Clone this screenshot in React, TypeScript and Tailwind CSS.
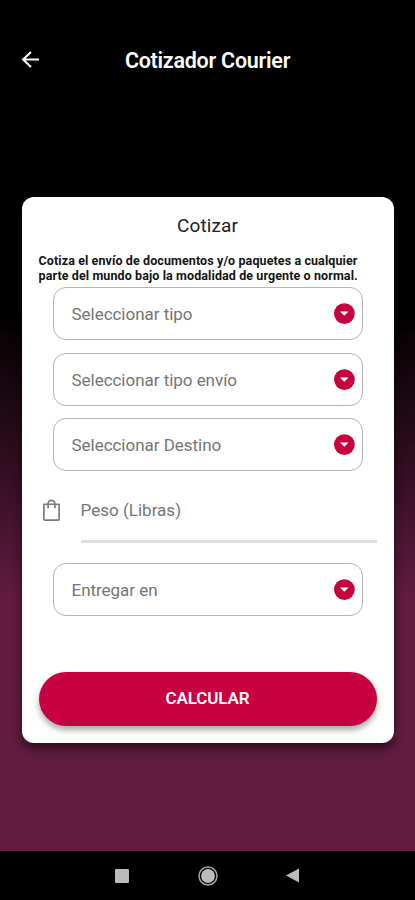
import { useState } from 'react'

interface SelectFieldProps {
  label: string
  className?: string
}

function SelectField({ label, className = '' }: SelectFieldProps) {
  return (
    <button
      type="button"
      className={`flex h-[53px] w-[310px] shrink-0 items-center justify-between self-center rounded-[13px] border border-[#b5b5b5] pl-[18px] pr-[7px] text-left text-[#757575] ${className}`}
    >
      <span className="whitespace-nowrap pt-[2px] text-[17px] tracking-[-0.03px]">{label}</span>
      <svg width="21" height="21" viewBox="0 0 21 21" className="shrink-0">
        <circle cx="10.4" cy="10.6" r="10.4" fill="#c70040" />
        <path d="M6 8.4h8.6l-4.3 4.3z" fill="#fff" />
      </svg>
    </button>
  )
}

function BagIcon() {
  return (
    <svg width="19" height="23" viewBox="0 0 20 24" fill="none" stroke="#7c7c7c" strokeWidth="1.8" className="shrink-0">
      <path d="M2 5.4h16v15.8a1 1 0 0 1-1 1H3a1 1 0 0 1-1-1z" strokeLinejoin="round" />
      <path d="M6.4 9.5V5a3.6 3.6 0 0 1 7.2 0v4.5" />
    </svg>
  )
}

function NavigationBar() {
  return (
    <nav className="flex h-[49px] shrink-0 items-center justify-between bg-black pl-[115px] pr-[116px]">
      <svg width="14" height="14" viewBox="0 0 14 14">
        <rect width="14" height="14" rx="1" fill="#bcbcbc" />
      </svg>
      <svg width="20" height="20" viewBox="0 0 20 20">
        <circle cx="10" cy="10" r="9" fill="none" stroke="#a4a4a4" strokeWidth="1.5" />
        <circle cx="10" cy="10" r="6.9" fill="#bcbcbc" />
      </svg>
      <svg width="13" height="15" viewBox="0 0 13 15">
        <path d="M13 0.5v14L0 7.5z" fill="#bcbcbc" />
      </svg>
    </nav>
  )
}

export default function App() {
  const [peso, setPeso] = useState('')

  return (
    <div className="flex h-[900px] w-[415px] flex-col overflow-hidden bg-[linear-gradient(to_bottom,#000_310px,#1b0911_400px,#360f22_480px,#611c3f_600px)] font-[Roboto,sans-serif]">
      <header className="flex h-[120px] shrink-0 items-center px-5 text-white">
        <button type="button" className="flex w-5 justify-center">
          <svg width="20" height="18" viewBox="0 0 20 18" fill="none" stroke="#fff" strokeWidth="2">
            <path d="M19 8.5H3M11 1L3 8.5l8 7.5" />
          </svg>
        </button>
        <h1 className="flex-1 pr-5 pt-[2px] text-center text-[21.5px] font-semibold tracking-[-0.26px]">Cotizador Courier</h1>
      </header>

      <main className="mx-[21.5px] mt-[77px] flex h-[545.5px] shrink-0 flex-col rounded-xl bg-white px-[17px] shadow-[0_6px_10px_rgba(0,0,0,0.5)]">
        <h2 className="mt-[15px] h-7 text-center text-[19px] leading-7 tracking-[0.1px] text-[#222]">Cotizar</h2>
        <p className="mt-[13px] whitespace-nowrap text-[12.5px] font-bold leading-[15px] tracking-[0.1px] text-[#151515]">
          Cotiza el envío de documentos y/o paquetes a cualquier
          <br />
          parte del mundo bajo la modalidad de urgente o normal.
        </p>

        <SelectField label="Seleccionar tipo" className="mt-[4px]" />
        <SelectField label="Seleccionar tipo envío" className="mt-[13px]" />
        <SelectField label="Seleccionar Destino" className="mt-[12px]" />

        <label className="mt-[15px] flex h-[57px] shrink-0 items-start">
          <span className="ml-[3px] mt-[13px]">
            <BagIcon />
          </span>
          <input
            value={peso}
            onChange={(e) => setPeso(e.target.value)}
            placeholder="Peso (Libras)"
            className="ml-[20px] h-full min-w-0 flex-1 border-b-[3px] border-[#dedede] pb-[6px] text-[17px] tracking-[0.02px] outline-none placeholder:text-[#757575]"
          />
        </label>

        <SelectField label="Entregar en" className="mt-[20px]" />

        <button
          type="button"
          className="mt-[56px] h-[54px] shrink-0 rounded-full bg-[#c70040] text-[17px] font-semibold tracking-[-0.1px] text-white shadow-[0_4px_6px_rgba(0,0,0,0.35)]"
        >
          CALCULAR
        </button>
      </main>

      <div className="flex-1" />
      <NavigationBar />
    </div>
  )
}
